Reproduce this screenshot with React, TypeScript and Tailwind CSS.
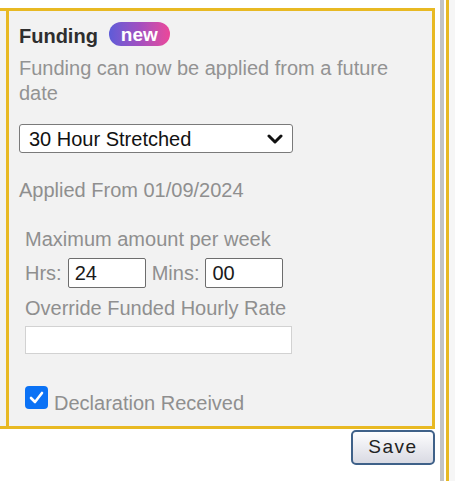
import React from 'react';

const Label: React.FC<{ children: React.ReactNode; className?: string }> = ({ children, className = '' }) => (
  <div className={`text-[20px] leading-[24px] text-[#8f8f8f] ${className}`}>{children}</div>
);

export default function App() {
  return (
    <div className="flex w-[455px] h-[481px] bg-white font-['Liberation_Sans',Arial,sans-serif] overflow-hidden">
      <div className="w-[435px] shrink-0 pt-[8px]">
        {/* funding panel */}
        <div className="h-[421px] border-y-[3px] border-r-[3px] border-[#e8b923] bg-[#f2f2f2] pl-[6px]">
          <div className="h-full border-l-[3px] border-[#e8b923] pl-[10px] pt-[13px]">
            <div className="flex items-start gap-[11px]">
              <span className="text-[20px] leading-[24px] font-bold text-[#2e2e2e]">Funding</span>
              <span className="-mt-[2px] h-[24px] px-[12px] pt-[2px] leading-[22px] text-[19px] font-bold text-white rounded-full bg-gradient-to-r from-[#5d5bd8] via-[#a24fc0] to-[#ec4699]">
                new
              </span>
            </div>

            <div className="mt-[8px] w-[390px] text-[20px] leading-[24.5px] text-[#939393]">
              Funding can now be applied from a future date
            </div>

            <div className="mt-[19px] flex items-center justify-between w-[274px] h-[29px] bg-white border border-[#7a7a7a] rounded-[3px] pl-[9px] pr-[9px]">
              <span className="text-[20px] leading-[22px] text-[#111]">30 Hour Stretched</span>
              <svg width="16" height="10" viewBox="0 0 16 10">
                <path d="M2 2 L8 8 L14 2" fill="none" stroke="#111" strokeWidth="3" strokeLinecap="round" strokeLinejoin="round" />
              </svg>
            </div>

            <Label className="mt-[25px] text-[#8a8a8a]">Applied From 01/09/2024</Label>

            <div className="pl-[6px]">
              <Label className="mt-[25px]">Maximum amount per week</Label>

              <div className="mt-[7px] flex items-center gap-[6px]">
                <span className="text-[20px] leading-[24px] text-[#8f8f8f]">Hrs:</span>
                <div className="w-[78px] h-[30px] bg-white border border-[#6d6d6d] rounded-[2px] pl-[6px] text-[20px] leading-[28px] text-[#1a1a1a]">
                  24
                </div>
                <span className="text-[20px] leading-[24px] text-[#8f8f8f]">Mins:</span>
                <div className="w-[78px] h-[30px] bg-white border border-[#6d6d6d] rounded-[2px] pl-[6px] text-[20px] leading-[28px] text-[#1a1a1a]">
                  00
                </div>
              </div>

              <Label className="mt-[8px]">Override Funded Hourly Rate</Label>

              <div className="mt-[6px] w-[267px] h-[28px] bg-white border border-[#d2d2d2]" />

              <div className="mt-[32px] flex items-start gap-[6px]">
                <div className="w-[23px] h-[23px] rounded-[4px] bg-[#0b72f5] flex items-center justify-center">
                  <svg width="15" height="13" viewBox="0 0 15 13">
                    <path d="M2 7 L6 11 L13 2" fill="none" stroke="white" strokeWidth="2.6" strokeLinecap="round" strokeLinejoin="round" />
                  </svg>
                </div>
                <Label className="mt-[5px]">Declaration Received</Label>
              </div>
            </div>
          </div>
        </div>

        <div className="mt-[1px] flex justify-end">
          <button className="w-[84px] h-[35px] rounded-[5px] border-2 border-[#3f6189] bg-gradient-to-b from-[#fdfdfe] to-[#d9dae3] text-[19px] tracking-[1.5px] text-[#222]">
            Save
          </button>
        </div>
      </div>

      {/* right edge lines */}
      <div className="ml-[5px] w-[4px] h-full bg-[#c3c3c3]" />
      <div className="ml-[2px] w-[3px] h-full bg-[#e8b923]" />
      <div className="flex-1 h-full bg-[#f6f6f6]" />
    </div>
  );
}
